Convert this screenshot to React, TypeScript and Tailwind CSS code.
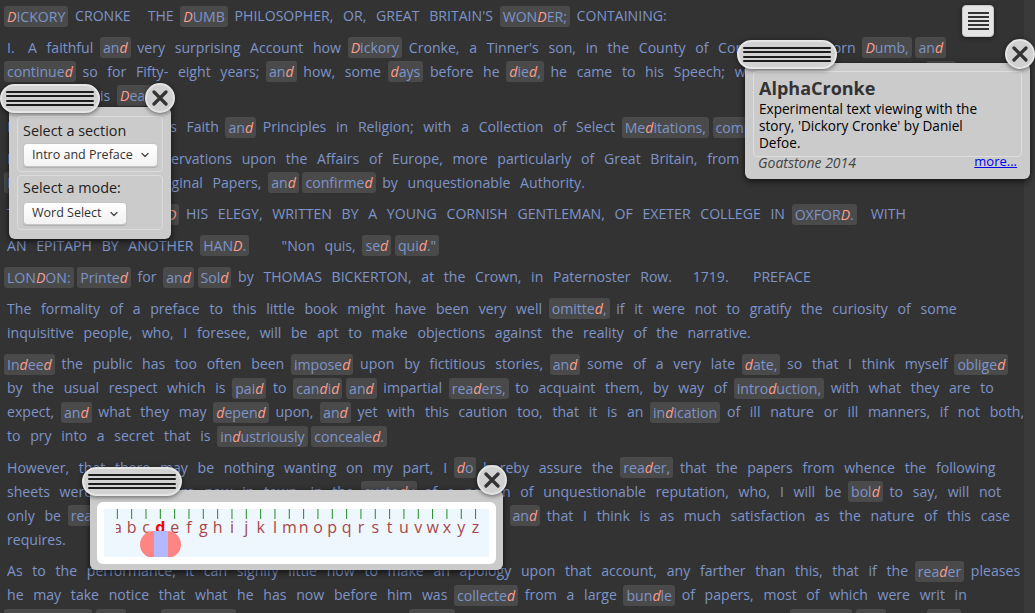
import React from 'react';
import { ChevronDown } from 'lucide-react';

// words in [brackets] carry a "d" and are marked up
const paragraphs: string[][] = [
  ["[DICKORY] CRONKE   THE [DUMB] PHILOSOPHER, OR, GREAT BRITAIN'S [WONDER;] CONTAINING:"],
  [
    "I.  A faithful [and] very surprising Account how [Dickory] Cronke, a Tinner's son, in the County of Cornwall, was born [Dumb,] [and]",
    "[continued] so for Fifty- eight years; [and] how, some [days] before he [died,] he came to his Speech; with Memoirs of his Life, [and] the",
    'manner of his [Death.]',
  ],
  ['II.  A [Declaration] of his Faith [and] Principles in Religion; with a Collection of Select [Meditations,] [composed] on several Occasions.'],
  [
    'III.  Several of his Observations upon the Affairs of Europe, more particularly of Great Britain, from 1688 to 1711.',
    '[Extracted] from the Original Papers, [and] [confirmed] by unquestionable Authority.',
  ],
  ['TO WHICH IS [ANNEXED] HIS ELEGY, WRITTEN BY A YOUNG CORNISH GENTLEMAN, OF EXETER COLLEGE IN [OXFORD.]   WITH'],
  ['AN EPITAPH BY ANOTHER [HAND.]        "Non quis, [sed] [quid."]'],
  ['[LONDON:] [Printed] for [and] [Sold] by THOMAS BICKERTON, at the Crown, in Paternoster Row.    1719.     PREFACE'],
  [
    'The formality of a preface to this little book might have been very well [omitted,] if it were not to gratify the curiosity of some',
    'inquisitive people, who, I foresee, will be apt to make objections against the reality of the narrative.',
  ],
  [
    '[Indeed] the public has too often been [imposed] upon by fictitious stories, [and] some of a very late [date,] so that I think myself [obliged]',
    'by the usual respect which is [paid] to [candid] [and] impartial [readers,] to acquaint them, by way of [introduction,] with what they are to',
    'expect, [and] what they may [depend] upon, [and] yet with this caution too, that it is an [indication] of ill nature or ill manners, if not both,',
    'to pry into a secret that is [industriously] [concealed.]',
  ],
  [
    'However, that there may be nothing wanting on my part, I [do] hereby assure the [reader,] that the papers from whence the following',
    'sheets were [extracted] are now in town, in the [custody] of a person of unquestionable reputation, who, I will be [bold] to say, will not',
    'only be [read] by such persons as have a right to peruse them all, [and] that I think is as much satisfaction as the nature of this case',
    'requires.',
  ],
  [
    'As to the performance, it can signify little how to make an apology upon that account, any farther than this, that if the [reader] pleases',
    'he may take notice that what he has now before him was [collected] from a large [bundle] of papers, most of which were writ in',
    '[handwriting,] [and] the [remainder] of them being written [under] his own eye, by a young man who was as [studious] [and] very [kind] to him.',
  ],
];

function Word({ w }: { w: string }) {
  const marked = w.startsWith('[') && w.endsWith(']');
  if (!marked) return <span className="px-[3px]">{w}</span>;
  const text = w.slice(1, -1);
  return (
    <span className="inline-block h-[21px] rounded-[3px] bg-[#4a4a4a] px-[3px] leading-[21px]">
      {text.split(/([dD])/).map((s, i) =>
        s === 'd' || s === 'D' ? (
          <i key={i} className="text-[#ff9d8c]">
            {s}
          </i>
        ) : (
          s
        )
      )}
    </span>
  );
}

function Line({ text }: { text: string }) {
  return (
    <div className="flex h-6 items-center whitespace-pre">
      {text
        .split(/( +)/)
        .filter((p) => p !== '')
        .map((p, i) => (p.trim() === '' ? <span key={i}>{p}</span> : <Word key={i} w={p} />))}
    </div>
  );
}

function Handle({ className }: { className: string }) {
  return (
    <div
      className={`absolute flex h-[29px] w-[100px] flex-col items-center justify-center gap-[2.5px] rounded-full border-2 border-[#e6e6e6] bg-[#d2d2d2] shadow-[0_1px_5px_rgba(0,0,0,0.55)] ${className}`}
    >
      {[0, 1, 2, 3].map((i) => (
        <div key={i} className="h-[2px] w-[88px] rounded-full bg-[#1c1c1c]" />
      ))}
    </div>
  );
}

function Close({ className }: { className: string }) {
  return (
    <div
      className={`absolute flex h-[30px] w-[30px] items-center justify-center rounded-full border-2 border-[#e4e4e4] bg-[#d0d0d0] shadow-[0_1px_5px_rgba(0,0,0,0.55)] ${className}`}
    >
      <svg width="16" height="16" viewBox="0 0 16 16">
        <path d="M2 2L14 14M14 2L2 14" stroke="#333" strokeWidth="3.2" strokeLinecap="round" />
      </svg>
    </div>
  );
}

function Select({ label, width }: { label: string; width: string }) {
  return (
    <div
      className={`flex items-center justify-between rounded-[4px] border border-[#c4c4c4] bg-gradient-to-b from-white to-[#f2f2f2] pl-[8px] pr-[6px] text-[12.5px] text-[#333] shadow-[0_1px_1px_rgba(0,0,0,0.15)] ${width}`}
    >
      <span>{label}</span>
      <ChevronDown className="h-3 w-3 text-[#444]" strokeWidth={2.5} />
    </div>
  );
}

const letters = 'abcdefghijklmnopqrstuvwxyz'.split('');

export default function App() {
  return (
    <div className="relative flex h-[613px] w-[1035px] overflow-hidden bg-[#333333] font-['Open_Sans',sans-serif]">
      <main className="flex-1 overflow-hidden pl-[4px] pt-[4px] text-[14.1px] text-[#7e94c8]">
        {paragraphs.map((lines, i) => (
          <div key={i} className="mb-[7.5px]">
            {lines.map((l, j) => (
              <Line key={j} text={l} />
            ))}
          </div>
        ))}
      </main>
      <div className="w-[11px] bg-[#3a3a3a]" />

      {/* menu button */}
      <div className="absolute left-[962px] top-[5px] flex h-[32px] w-[32px] flex-col items-center justify-center gap-[2px] rounded-[4px] border border-[#c8c8c8] bg-[#e4e4e4] shadow-[0_1px_4px_rgba(0,0,0,0.5)]">
        {[0, 1, 2, 3, 4].map((i) => (
          <div key={i} className="h-[2px] w-[21px] bg-[#333]" />
        ))}
      </div>

      {/* about panel */}
      <div className="absolute left-[745px] top-[63px] h-[116px] w-[285px] rounded-[6px] bg-[#cbcbcb] px-[8px] pt-[8px] shadow-[0_2px_6px_rgba(0,0,0,0.7)]">
        <div className="h-[86px] rounded-[4px] border border-[#dedede] px-[5px] pt-[4px]">
          <div className="text-[18px] font-bold leading-[24px] text-[#333]">AlphaCronke</div>
          <div className="whitespace-nowrap text-[13.6px] leading-[17px] text-black">
            Experimental text viewing with the
            <br />
            story, 'Dickory Cronke' by Daniel
            <br />
            Defoe.
          </div>
        </div>
        <div className="-mt-[2px] flex h-[14px] items-center justify-between px-[5px]">
          <span className="text-[14px] italic text-[#444]">Goatstone 2014</span>
          <span className="text-[13px] text-[#0000ee] underline">more...</span>
        </div>
      </div>
      <Handle className="left-[737px] top-[40px]" />
      <Close className="left-[1005px] top-[39px]" />

      {/* section / mode panel */}
      <div className="absolute left-[9px] top-[107px] flex h-[132px] w-[162px] flex-col gap-[3px] rounded-[6px] bg-[#cbcbcb] px-[8px] pt-[9px] shadow-[0_2px_6px_rgba(0,0,0,0.7)]">
        <div className="h-[56px] rounded-[4px] border border-[#dcdcdc] px-[5px] pt-[3px]">
          <div className="text-[14.4px] leading-[22px] text-[#222]">Select a section</div>
          <Select label="Intro and Preface" width="mt-[1px] h-[24px] w-[135px]" />
        </div>
        <div className="h-[55px] rounded-[4px] border border-[#dcdcdc] px-[5px] pt-[1px]">
          <div className="text-[14.4px] leading-[22px] text-[#222]">Select a mode:</div>
          <Select label="Word Select" width="mt-[3px] h-[23px] w-[104px]" />
        </div>
      </div>
      <Handle className="left-0 top-[84px]" />
      <Close className="left-[145px] top-[83px]" />

      {/* letter slider */}
      <div className="absolute left-[90px] top-[490px] h-[80px] w-[413px] rounded-[6px] bg-[#cbcbcb] px-[7px] pt-[12px] shadow-[0_2px_6px_rgba(0,0,0,0.7)]">
        <div className="h-[62px] rounded-[6px] bg-white p-[7px]">
          <div className="relative h-[48px] overflow-hidden bg-[#eef6fe]">
            <svg className="absolute left-0 top-0" width="385" height="12">
              {letters.map((l, i) => (
                <line key={l} x1={13.33 + 14.33 * i} x2={13.33 + 14.33 * i} y1="0" y2="10" stroke="#1e8c1e" strokeWidth="1" />
              ))}
            </svg>
            <div className="absolute left-[12px] right-0 top-[8px] h-[20px] overflow-hidden">
              {letters.map((l, i) => (
                <span
                  key={l}
                  className={`absolute top-0 -translate-x-1/2 text-[16px] leading-[20px] ${
                    l === 'd' ? 'font-bold text-[#ff0000]' : 'text-[#a84646]'
                  }`}
                  style={{ left: 1.33 + 14.33 * i }}
                >
                  {l}
                </span>
              ))}
            </div>
            <div className="absolute left-[36px] top-[22px] flex h-[27px] w-[41px] overflow-hidden rounded-full">
              <div className="w-[13.5px] bg-[#ff8585]" />
              <div className="w-[14px] bg-[#b3b9ff]" />
              <div className="w-[13.5px] bg-[#ff8585]" />
            </div>
          </div>
        </div>
      </div>
      <Handle className="left-[82px] top-[467px]" />
      <Close className="left-[477px] top-[465px]" />
    </div>
  );
}
